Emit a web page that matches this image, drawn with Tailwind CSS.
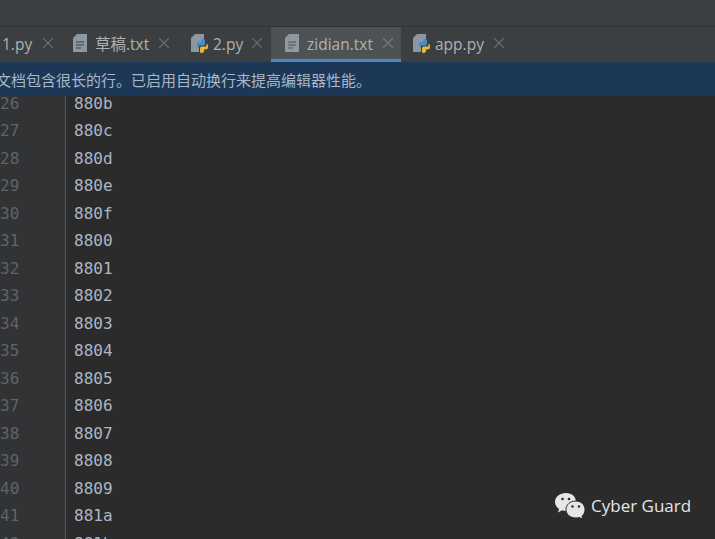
<!DOCTYPE html>
<html lang="zh-CN">

<head>
    <meta charset="UTF-8">
    <meta name="viewport" content="width=device-width, initial-scale=1.0">
    <title>zidian.txt</title>
    <script src="https://cdn.jsdelivr.net/npm/@tailwindcss/browser@4"></script>
</head>

<body class="bg-[#2b2b2b] overflow-hidden">
    <div class="relative w-[715px] h-[539px] overflow-hidden flex flex-col font-['Open_Sans','Noto_Sans_CJK_SC',sans-serif]">
        <!-- title strip -->
        <div class="h-[27px] shrink-0 bg-[#3c3f41] border-b border-[#323232]"></div>

        <!-- tabs -->
        <div class="h-[35px] shrink-0 bg-[#3c3f41] flex text-[15.5px] text-[#afb1b3]">
            <div class="w-[59px] flex items-center pb-[3px]">
                <span class="ml-[2px] w-[41px] mt-[3px]">1.py</span>
                <svg class="w-[10px] h-[10px]" viewBox="0 0 10 10" fill="none" stroke="#6e7173" stroke-width="1.2"><path d="M0 0L10 10M10 0L0 10"/></svg>
            </div>
            <div class="w-[118px] flex items-center pb-[3px]">
                <svg class="ml-[14px] w-[14px] h-[18px]" viewBox="0 0 14 18"><path d="M4 0H14V18H0V4Z" fill="#9aa7b0" fill-opacity=".85"/><path d="M3 8H11M3 11H11M3 14H8" stroke="#3c3f41" stroke-width="1.2"/></svg>
                <span class="ml-[8px] w-[64px] mt-[3px]">草稿.txt</span>
                <svg class="w-[10px] h-[10px]" viewBox="0 0 10 10" fill="none" stroke="#6e7173" stroke-width="1.2"><path d="M0 0L10 10M10 0L0 10"/></svg>
            </div>
            <div class="w-[94px] flex items-center pb-[3px]">
                <svg class="ml-[14px] w-[17px] h-[19px]" viewBox="0 0 17 19"><path d="M4 0H13V9H8V18H0V4Z" fill="#9aa7b0" fill-opacity=".85"/><path d="M6 10.5C6 8 8 8 10 8V6.5C10 5 12 5 12 5C13 5 14 5.500 14 6.500V9.500C14 11 13 11.500 12 11.500H9C8 11.500 7.500 12 7.500 13V14H7C6 14 6 12 6 10.500Z" fill="#3d8fd1"/><path d="M17 13C17 15.500 15 15.500 13 15.500V17C13 18.500 11 19 11 19C10 19 9 18.500 9 17.500V14.500C9 13 10 12.500 11 12.500H14C15 12.500 15.500 12 15.500 11V10H16C17 10 17 11.500 17 13Z" fill="#e8b92f"/></svg>
                <span class="ml-[5px] w-[39px] mt-[3px]">2.py</span>
                <svg class="w-[10px] h-[10px]" viewBox="0 0 10 10" fill="none" stroke="#6e7173" stroke-width="1.2"><path d="M0 0L10 10M10 0L0 10"/></svg>
            </div>
            <div class="w-[130px] flex items-center bg-[#4e5254] border-b-[3px] border-[#4a88c7]">
                <svg class="ml-[14px] w-[14px] h-[18px]" viewBox="0 0 14 18"><path d="M4 0H14V18H0V4Z" fill="#9aa7b0" fill-opacity=".85"/><path d="M3 8H11M3 11H11M3 14H8" stroke="#4e5254" stroke-width="1.2"/></svg>
                <span class="ml-[8px] w-[76px] mt-[3px]">zidian.txt</span>
                <svg class="w-[10px] h-[10px]" viewBox="0 0 10 10" fill="none" stroke="#7b7e80" stroke-width="1.2"><path d="M0 0L10 10M10 0L0 10"/></svg>
            </div>
            <div class="flex items-center pb-[3px]">
                <svg class="ml-[12px] w-[17px] h-[19px]" viewBox="0 0 17 19"><path d="M4 0H13V9H8V18H0V4Z" fill="#9aa7b0" fill-opacity=".85"/><path d="M6 10.5C6 8 8 8 10 8V6.5C10 5 12 5 12 5C13 5 14 5.500 14 6.500V9.500C14 11 13 11.500 12 11.500H9C8 11.500 7.500 12 7.500 13V14H7C6 14 6 12 6 10.500Z" fill="#3d8fd1"/><path d="M17 13C17 15.500 15 15.500 13 15.500V17C13 18.500 11 19 11 19C10 19 9 18.500 9 17.500V14.500C9 13 10 12.500 11 12.500H14C15 12.500 15.500 12 15.500 11V10H16C17 10 17 11.500 17 13Z" fill="#e8b92f"/></svg>
                <span class="ml-[5px] w-[59px] mt-[3px]">app.py</span>
                <svg class="w-[10px] h-[10px]" viewBox="0 0 10 10" fill="none" stroke="#6e7173" stroke-width="1.2"><path d="M0 0L10 10M10 0L0 10"/></svg>
            </div>
        </div>

        <!-- notice -->
        <div class="h-[34px] shrink-0 bg-[#1d3857] flex items-center pt-[2px] text-[15px] text-[#a9b7c6] whitespace-nowrap">
            <span class="-ml-[4px]">文档包含很长的行。已启用自动换行来提高编辑器性能。</span>
        </div>

        <!-- editor -->
        <div class="flex-1 min-h-0 flex font-['DejaVu_Sans_Mono',monospace] text-[16px] leading-[27.47px]">
            <div class="w-[66px] shrink-0 overflow-hidden bg-[#313335] border-r border-[#555555] text-[#606366] text-right pr-[47px]">
                <div class="-mt-[6px]">
                    <div>26</div><div>27</div><div>28</div><div>29</div><div>30</div><div>31</div>
                    <div>32</div><div>33</div><div>34</div><div>35</div><div>36</div><div>37</div>
                    <div>38</div><div>39</div><div>40</div><div>41</div><div>42</div>
                </div>
            </div>
            <div class="flex-1 overflow-hidden text-[#a9b7c6] pl-[8px]">
                <div class="-mt-[6px]">
                    <div>880b</div><div>880c</div><div>880d</div><div>880e</div><div>880f</div><div>8800</div>
                    <div>8801</div><div>8802</div><div>8803</div><div>8804</div><div>8805</div><div>8806</div>
                    <div>8807</div><div>8808</div><div>8809</div><div>881a</div><div>881b</div>
                </div>
            </div>
        </div>

        <!-- watermark -->
        <div class="absolute left-[555px] top-[492px] flex items-center">
            <svg class="w-[30px] h-[27px]" viewBox="0 0 30 27">
                <path d="M11 1C5 1 0 4.800 0 10C0 13 1.700 15.300 4 17L3 20.500L7 18.300C8.300 18.700 9.600 19 11 19C17 19 21 15 21 10C21 4.800 17 1 11 1Z" fill="#e6e6e6"/>
                <circle cx="7.500" cy="7" r="1.300" fill="#2b2b2b"/><circle cx="14" cy="7" r="1.300" fill="#2b2b2b"/>
                <path d="M21 9C15 9 11 12.800 11 17.500C11 22.200 15 26 21 26C22 26 23.200 25.800 24.300 25.500L28 27L27 24C29 22.500 30 20 30 17.500C30 12.800 26 9 21 9Z" fill="#e6e6e6" stroke="#2b2b2b"/>
                <circle cx="17.500" cy="14.500" r="1.200" fill="#2b2b2b"/><circle cx="24" cy="14.500" r="1.200" fill="#2b2b2b"/>
            </svg>
            <span class="ml-[6px] text-[17px] text-[#e6e6e6] whitespace-nowrap">Cyber Guard</span>
        </div>
    </div>
</body>

</html>
